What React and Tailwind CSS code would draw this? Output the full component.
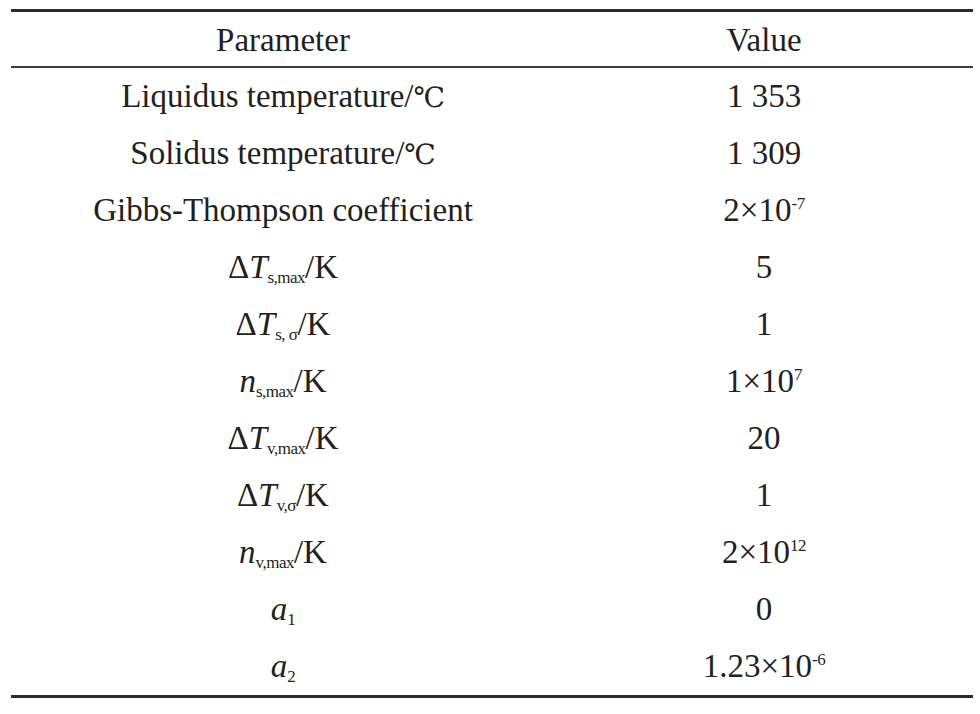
const serif = { fontFamily: '"Liberation Serif", "Times New Roman", "DejaVu Serif", serif' };

function Sub({ children }) {
  return <span className="text-[17px] leading-none not-italic tracking-[-0.03em] align-[-5px]">{children}</span>;
}

function Sup({ children }) {
  return <span className="text-[17px] leading-none tracking-[-0.03em] align-[12px]">{children}</span>;
}

function I({ children }) {
  return <span className="italic">{children}</span>;
}

function Deg() {
  return <span className="font-['DejaVu_Serif'] text-[28px] leading-none">℃</span>;
}

const rows = [
  {
    name: (
      <>
        Liquidus temperature/<Deg />
      </>
    ),
    value: "1 353",
  },
  {
    name: (
      <>
        Solidus temperature/<Deg />
      </>
    ),
    value: "1 309",
  },
  {
    name: "Gibbs-Thompson coefficient",
    value: (
      <>
        2×10<Sup>-7</Sup>
      </>
    ),
  },
  {
    name: (
      <>
        Δ<I>T</I>
        <Sub>s,max</Sub>/K
      </>
    ),
    value: "5",
  },
  {
    name: (
      <>
        Δ<I>T</I>
        <Sub>s, σ</Sub>/K
      </>
    ),
    value: "1",
  },
  {
    name: (
      <>
        <I>n</I>
        <Sub>s,max</Sub>/K
      </>
    ),
    value: (
      <>
        1×10<Sup>7</Sup>
      </>
    ),
  },
  {
    name: (
      <>
        Δ<I>T</I>
        <Sub>v,max</Sub>/K
      </>
    ),
    value: "20",
  },
  {
    name: (
      <>
        Δ<I>T</I>
        <Sub>v,σ</Sub>/K
      </>
    ),
    value: "1",
  },
  {
    name: (
      <>
        <I>n</I>
        <Sub>v,max</Sub>/K
      </>
    ),
    value: (
      <>
        2×10<Sup>12</Sup>
      </>
    ),
  },
  {
    name: (
      <>
        <I>a</I>
        <Sub>1</Sub>
      </>
    ),
    value: "0",
  },
  {
    name: (
      <>
        <I>a</I>
        <Sub>2</Sub>
      </>
    ),
    value: (
      <>
        1.23×10<Sup>-6</Sup>
      </>
    ),
  },
];

export default function App() {
  return (
    <div className="w-[980px] h-[714px] bg-white pt-[9px] text-[#231f20]" style={serif}>
      <div className="ml-[11px] w-[962px] border-t-[3px] border-b-[3px] border-[#2b2b2b] text-[33px]">
        <div className="grid grid-cols-[544px_1fr] h-[56px] leading-[56px] border-b-[2px] border-[#3a3a3a] text-center">
          <div>Parameter</div>
          <div>Value</div>
        </div>
        {rows.map((r, i) => (
          <div key={i} className="grid grid-cols-[544px_1fr] h-[57px] leading-[57px] text-center">
            <div className="whitespace-nowrap">{r.name}</div>
            <div className="whitespace-nowrap">{r.value}</div>
          </div>
        ))}
      </div>
    </div>
  );
}
